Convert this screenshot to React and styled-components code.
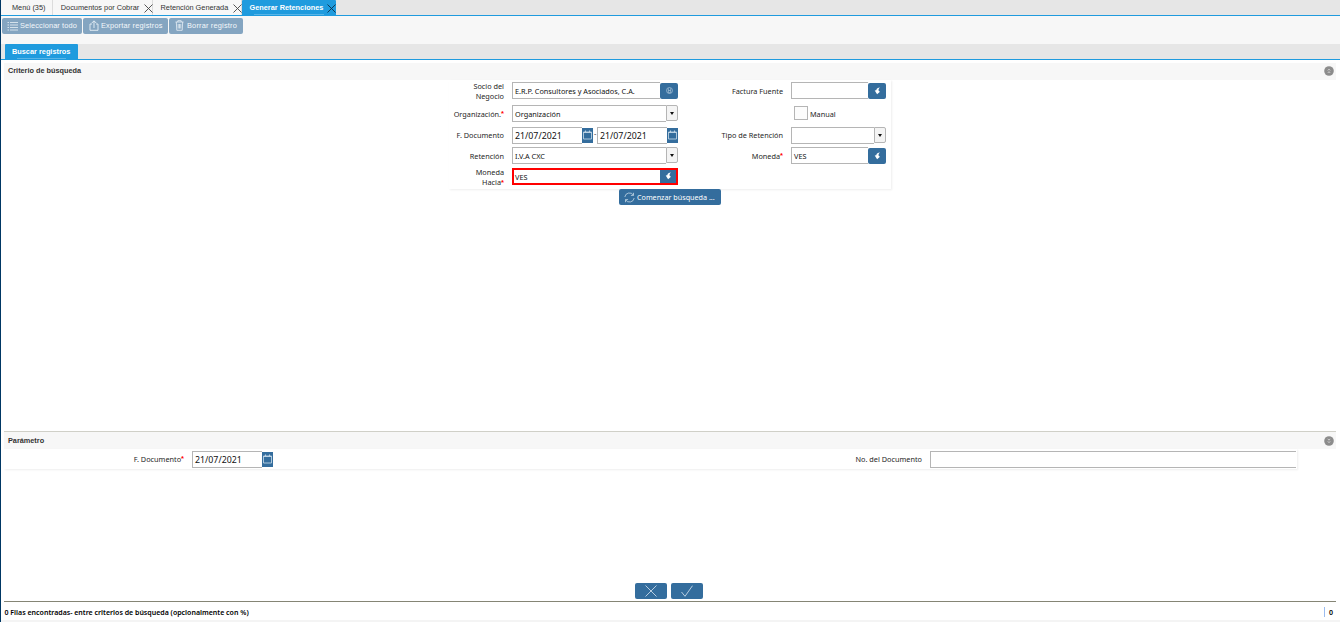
import React from 'react'
import styled, { createGlobalStyle } from 'styled-components'

const GlobalStyle = createGlobalStyle`
  * {
    box-sizing: border-box;
  }

  body {
    margin: 0;
    overflow: hidden;
    background: #fff;
    color: #262626;
    font-family: 'Noto Sans', 'Open Sans', sans-serif;
    font-size: 7.3px;
  }
`

const Window = styled.div`
  display: flex;
  flex-direction: column;
  height: 622px;
  border-left: 1px solid #003764;
`

const TabBar = styled.div`
  display: flex;
  flex: none;
  height: 16px;
  padding-left: ${props => props.$indent || 0}px;
  background: #e6e6e6;
  border-bottom: 1px solid #1f9bde;
`

const Tab = styled.div`
  display: flex;
  position: relative;
  align-items: center;
  width: ${props => props.$width}px;
  padding-left: ${props => props.$pad}px;
  border-right: ${props => props.$active ? 0 : '1px solid #dcdcdc'};
  border-radius: ${props => props.$active ? '1px 1px 0 0' : 0};
  background: ${props => props.$active ? '#1f9bde' : '#f7f7f7'};
  color: ${props => props.$active ? '#fff' : '#333'};
  font: ${props => props.$active ? 'bold' : 'normal'} 7.35px 'Liberation Sans', sans-serif;
  white-space: nowrap;

  &::after {
    content: '';
    display: ${props => props.$active ? 'block' : 'none'};
    position: absolute;
    bottom: 0;
    left: 12px;
    width: calc(100% - 24px);
    height: 1px;
    background: #58b5e7;
  }
`

const TabClose = styled.svg`
  width: 9px;
  height: 9px;
  margin: 1px ${props => props.$active ? 0 : -1}px 0 auto;
  fill: none;
  stroke: ${props => props.$active ? '#0c3048' : '#444'};
  stroke-width: 0.9;
`

const Toolbar = styled.div`
  display: flex;
  flex: none;
  gap: 1px;
  height: 28px;
  padding: 2px 0 0 1px;
  background: #f7f7f7;
`

const Button = styled.button`
  display: flex;
  flex: none;
  align-items: center;
  justify-content: ${props => props.$center ? 'center' : 'flex-start'};
  width: ${props => props.$width}px;
  height: 16px;
  padding: 0 0 ${props => props.$center ? 0 : 1}px ${props => props.$center ? 0 : 5}px;
  gap: 2px;
  border: 0;
  border-radius: 2px;
  background: ${props => props.disabled ? '#84a5c1' : '#346d9d'};
  color: ${props => props.disabled ? '#f4f8fb' : '#fff'};
  font: ${props => props.$sans ? "7.4px 'Liberation Sans'" : "7.2px/10px 'Noto Sans'"}, sans-serif;
  letter-spacing: ${props => props.$spacing || 0}px;
  white-space: nowrap;

  svg {
    flex: none;
    fill: none;
    stroke: ${props => props.disabled ? '#e8f0f6' : '#d9e6f1'};
  }
`

const Section = styled.section`
  flex: none;
  height: ${props => props.$height}px;
  margin: 0 4px 0 3px;
  padding-top: ${props => props.$split ? 0 : 3}px;
  border-top: ${props => props.$split ? '1px solid #d0d0c8' : 0};
`

const SectionHeader = styled.div`
  display: flex;
  align-items: center;
  justify-content: space-between;
  height: 17px;
  padding: 0 2px ${props => props.$raised ? 2 : 1}px 4px;
  background: #f7f7f7;
  color: #333;
  font: bold 7.3px 'Liberation Sans', sans-serif;
`

const Collapse = styled.svg`
  width: 10px;
  height: 10px;
  margin-top: 1px;
`

const Criteria = styled.div`
  display: grid;
  grid-template-columns: 55px 166px 97px 95px;
  grid-template-rows: 23px 22px 20px 21px 21px;
  column-gap: 8px;
  align-items: start;
  width: 442px;
  height: 109px;
  margin-left: 445px;
  padding-top: 2px;
  box-shadow: 1px 1px 2px #eee;
`

const Label = styled.label`
  display: flex;
  align-items: center;
  justify-content: flex-end;
  height: ${props => props.$raised ? 15 : 17}px;
  line-height: 10px;
  text-align: right;
  white-space: nowrap;
`

const Required = styled.span`
  color: #f00;
  font: bold 7.5px/8px 'Liberation Sans', sans-serif;
`

const Field = styled.div`
  display: flex;
  flex: none;
  width: ${props => props.$width}px;
  height: 17px;
  border: ${props => props.$error ? '2px solid #f00' : 0};
  background: #fff;
`

const Value = styled.div`
  display: flex;
  align-items: center;
  flex: ${props => props.$width ? 'none' : 1};
  width: ${props => props.$width}px;
  height: 100%;
  padding: ${props => props.$date ? 1 : 2}px 0 0 ${props => props.$bare ? 1 : 2}px;
  border: ${props => props.$bare ? 0 : '1px solid #b5b5b5'};
  border-right: 0;
  color: #111;
  font-size: ${props => props.$date ? 8.8 : 7.3}px;
  line-height: 1;
  white-space: nowrap;
`

const Trigger = styled.div`
  display: flex;
  flex: none;
  align-items: center;
  justify-content: center;
  width: ${props => props.$width || 18}px;
  height: ${props => props.$flat ? '100%' : '16px'};
  margin-top: ${props => props.$flat ? 0 : 1}px;
  border-radius: ${props => props.$flat ? 0 : '2px'};
  background: #346d9d;

  svg {
    margin-bottom: 1px;
  }
`

const CalendarTrigger = styled(Trigger)`
  height: 15px;
  margin-top: 1px;
`

const Arrow = styled.div`
  display: flex;
  flex: none;
  align-items: center;
  justify-content: center;
  width: 12px;
  height: 16px;
  border: 1px solid #b5b5b5;
  border-radius: 0 2px 2px 0;
  background: #f4f4f4;

  &::after {
    content: '';
    border: 2.5px solid transparent;
    border-top: 3px solid #111;
    border-bottom: 0;
  }
`

const Dash = styled.span`
  width: 4px;
  padding-left: 1px;
  line-height: 12px;
`

const Check = styled.label`
  display: flex;
  align-items: center;
  height: 17px;
  padding-left: 3px;
  gap: 2px;

  i {
    width: 14px;
    height: 14px;
    margin-top: -1px;
    border: 1px solid #b5b5b5;
    background: #fcfcfc;
  }

  span {
    padding-top: 1px;
  }
`

const SearchRow = styled.div`
  display: flex;
  padding-left: 615px;
`

const Parameters = styled.div`
  display: flex;
  width: 1293px;
  height: 20px;
  padding-top: 2px;
  box-shadow: 1px 1px 2px #eee;
`

const ParameterLabel = styled(Label)`
  flex: none;
  width: ${props => props.$width}px;
  margin-right: 8px;
`

const Confirm = styled.div`
  display: flex;
  flex: none;
  gap: 4px;
  height: 18px;
  padding-left: 634px;
`

const Status = styled.footer`
  display: flex;
  flex: none;
  align-items: center;
  justify-content: space-between;
  height: 19px;
  margin: 0 4px 0 3px;
  padding: 2px 0 0 0.5px;
  border-top: 1px solid #858575;
  color: #000;
  font-size: 7.02px;
  font-weight: 600;
`

const Count = styled.span`
  padding: 0 3px 0 4px;
  border-left: 1px solid #9bbcf0;
`

const BottomShade = styled.div`
  flex: none;
  height: 2px;
  background: #f4f4f4;
`

const CloseIcon = ({ active }) => (
  <TabClose viewBox="0 0 9 9" $active={active}>
    <path d="M0.5 0.5L8.5 8.5M8.5 0.5L0.5 8.5" />
  </TabClose>
)

const Bolt = () => (
  <svg width="7" height="8" viewBox="0 0 7 8">
    <path d="M6 0.6C4 0.6 2.5 1.5 2.3 3.2L0.7 3.4L3.1 7.2L6 4.8L4.8 4C4.2 2.8 4.7 1.5 6 0.6Z" fill="#fff" />
  </svg>
)

const CalendarIcon = () => (
  <svg width="9" height="10" viewBox="0 0 9 10" fill="none" stroke="#bcd2e3">
    <path d="M0.5 2H8.5V9H0.5Z" strokeWidth="0.9" />
    <path d="M0.5 2.5H8.5M2.5 0.5V2.5M6.5 0.5V2.5" strokeWidth="1.1" />
  </svg>
)

const DateField = ({ width, trigger }) => (
  <>
    <Value $width={width} $date>21/07/2021</Value>
    <CalendarTrigger $width={trigger} $flat><CalendarIcon /></CalendarTrigger>
  </>
)

const CollapseIcon = ({ down }) => (
  <Collapse viewBox="0 0 10 10">
    <circle cx="5" cy="5" r="4.8" fill="#8c8c8c" />
    <path
      d={down ? 'M3.8 2.8L5 4.2L6.2 2.8M3.8 5.3L5 6.7L6.2 5.3' : 'M3.8 4.5L5 3.1L6.2 4.5M3.8 7L5 5.6L6.2 7'}
      fill="none"
      stroke="#ddd"
      strokeWidth="0.8"
    />
  </Collapse>
)

const App = () => (
  <>
    <GlobalStyle />
    <Window>
      <TabBar>
        <Tab $width={52} $pad={11}>Menú (35)</Tab>
        <Tab $width={100} $pad={7.8}>Documentos por Cobrar<CloseIcon /></Tab>
        <Tab $width={89} $pad={7.5}>Retención Generada<CloseIcon /></Tab>
        <Tab $width={94} $pad={7.5} $active>Generar Retenciones<CloseIcon active /></Tab>
      </TabBar>
      <Toolbar>
        <Button $width={80} $spacing={0.12} $sans disabled>
          <svg width="11" height="10" viewBox="0 0 11 10" strokeWidth="0.8">
            <path d="M0.5 1.5H2M0.5 4H2M0.5 6.5H2M0.5 9H2M3 1.5H11M3 4H11M3 6.5H11M3 9H11" />
          </svg>
          Seleccionar todo
        </Button>
        <Button $width={85} $spacing={0.18} $sans disabled>
          <svg width="11" height="11" viewBox="0 0 11 11" strokeWidth="0.9">
            <path d="M4 4H2V10.3H10V4H8M6 8V1M3.8 3L6 0.8L8.2 3" />
          </svg>
          Exportar registros
        </Button>
        <Button $width={74} $spacing={0.18} $sans disabled>
          <svg width="11" height="11" viewBox="0 0 11 11" strokeWidth="0.8">
            <path d="M1.5 2H9.5M3.8 2V0.7H7.2V2M2.3 2L2.8 10.3H8.2L8.7 2M4.2 4V8.5M5.5 4V8.5M6.8 4V8.5" />
          </svg>
          Borrar registro
        </Button>
      </Toolbar>
      <TabBar $indent={4}>
        <Tab $width={73} $pad={7} $active>Buscar registros</Tab>
      </TabBar>
      <Section $height={371}>
        <SectionHeader $raised>Criterio de búsqueda<CollapseIcon /></SectionHeader>
        <Criteria>
          <Label>Socio del<br />Negocio</Label>
          <Field>
            <Value>E.R.P. Consultores y Asociados, C.A.</Value>
            <Trigger>
              <svg width="7" height="7" viewBox="0 0 7 7" fill="none" stroke="#a9c4da" strokeWidth="0.7">
                <circle cx="3.5" cy="3.5" r="3" />
                <path d="M2.3 1.3V5.7H4.7V1.3M2.3 3.5H4.7" />
              </svg>
            </Trigger>
          </Field>
          <Label>Factura Fuente</Label>
          <Field><Value /><Trigger><Bolt /></Trigger></Field>

          <Label>Organización.<Required>*</Required></Label>
          <Field><Value>Organización</Value><Arrow /></Field>
          <span />
          <Check><i /><span>Manual</span></Check>

          <Label $raised>F. Documento</Label>
          <Field>
            <DateField width={70} trigger={11} />
            <Dash>-</Dash>
            <DateField width={70} trigger={11} />
          </Field>
          <Label $raised>Tipo de Retención</Label>
          <Field><Value /><Arrow /></Field>

          <Label>Retención</Label>
          <Field><Value>I.V.A CXC</Value><Arrow /></Field>
          <Label>Moneda<Required>*</Required></Label>
          <Field><Value>VES</Value><Trigger><Bolt /></Trigger></Field>

          <Label><span>Moneda<br />Hacia<Required>*</Required></span></Label>
          <Field $error>
            <Value $bare>VES</Value>
            <Trigger $width={16} $flat><Bolt /></Trigger>
          </Field>
        </Criteria>
        <SearchRow>
          <Button $width={102}>
            <svg width="11" height="11" viewBox="0 0 11 11" strokeWidth="0.7" style={{ marginTop: 2 }}>
              <path d="M0.8 5A4.7 4.7 0 0 1 9.4 3.1M9.5 0.8V3.4H6.9M10.2 6A4.7 4.7 0 0 1 1.6 7.9M1.5 10.2V7.6H4.1" />
            </svg>
            Comenzar búsqueda ...
          </Button>
        </SearchRow>
      </Section>
      <Section $height={152} $split>
        <SectionHeader>Parámetro<CollapseIcon down /></SectionHeader>
        <Parameters>
          <ParameterLabel $width={180} $raised>F. Documento<Required>*</Required></ParameterLabel>
          <Field $width={81}><DateField width={70} trigger={11} /></Field>
          <ParameterLabel $width={649} $raised>No. del Documento</ParameterLabel>
          <Field $width={366}><Value /></Field>
        </Parameters>
      </Section>
      <Confirm>
        <Button $width={32} $center aria-label="Cancelar">
          <svg width="12" height="12" viewBox="0 0 12 12" strokeWidth="0.8">
            <path d="M0.5 0.5L11.5 11.5M11.5 0.5L0.5 11.5" />
          </svg>
        </Button>
        <Button $width={32} $center aria-label="Aceptar">
          <svg width="12" height="12" viewBox="0 0 12 12" strokeWidth="0.8">
            <path d="M0.5 7L4 11.3L11.5 0.7" />
          </svg>
        </Button>
      </Confirm>
      <Status>
        <span>0 Filas encontradas- entre criterios de búsqueda (opcionalmente con %)</span>
        <Count>0</Count>
      </Status>
      <BottomShade />
    </Window>
  </>
)

export default App
